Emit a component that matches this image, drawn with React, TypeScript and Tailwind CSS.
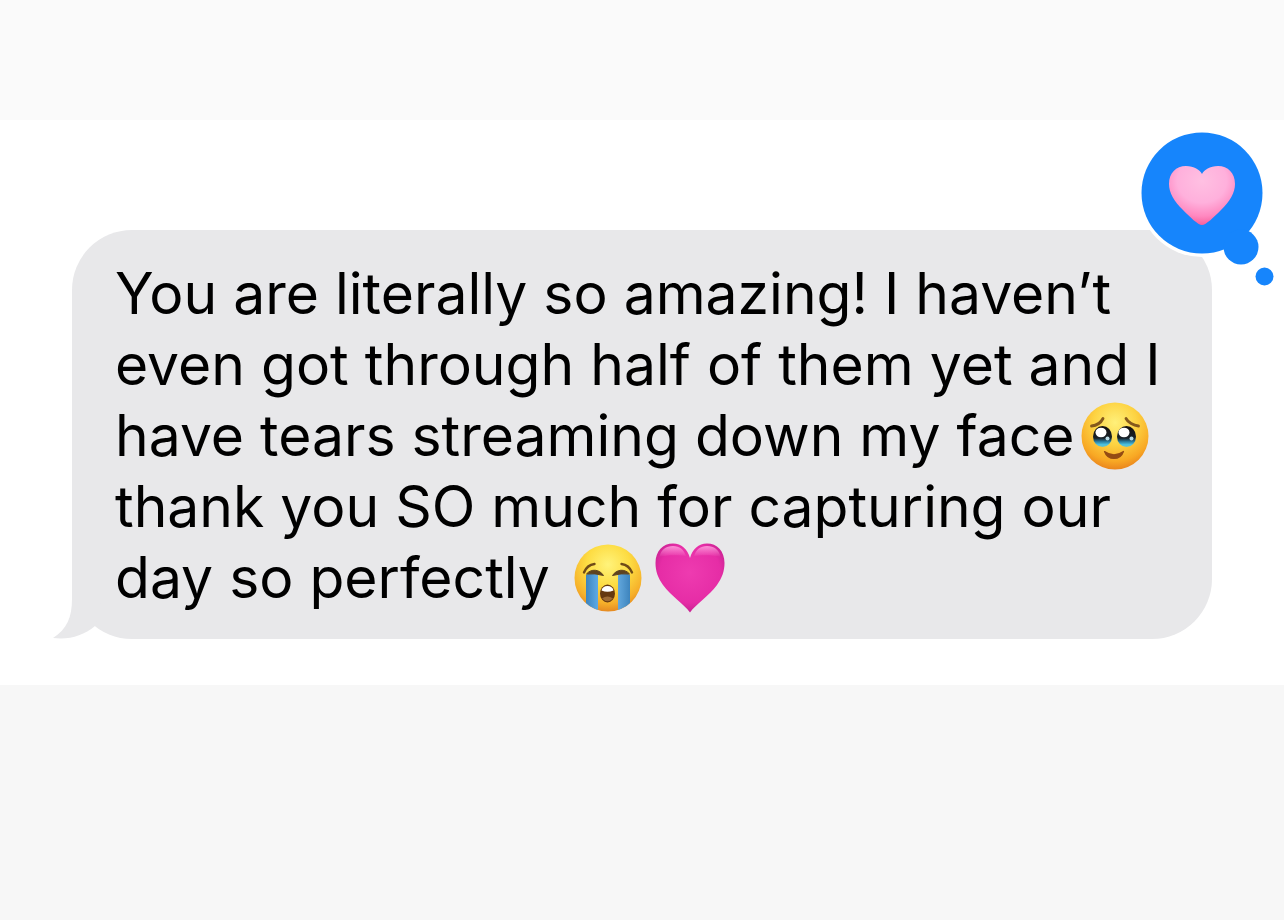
import React from "react";

function TearyFace() {
  return (
    <svg role="img" aria-label="face holding back tears" viewBox="0 0 68 68" className="ml-1.5 size-[68px] shrink-0">
      <defs>
        <radialGradient id="teary-skin" cx="0.5" cy="0.3" r="0.72">
          <stop offset="0" stopColor="#fff07a" />
          <stop offset="0.45" stopColor="#fdd342" />
          <stop offset="0.8" stopColor="#f8a824" />
          <stop offset="1" stopColor="#e8801c" />
        </radialGradient>
        <linearGradient id="teary-eye" x1="0" y1="0" x2="0" y2="1">
          <stop offset="0" stopColor="#15100e" />
          <stop offset="0.58" stopColor="#182128" />
          <stop offset="0.74" stopColor="#2a7c9f" />
          <stop offset="0.88" stopColor="#4cc0de" />
          <stop offset="1" stopColor="#6cc4c4" />
        </linearGradient>
      </defs>
      <circle cx="34" cy="34" r="33.5" fill="url(#teary-skin)" />
      <path d="M10.500 24C15.500 23.500 20 20.500 22 16.500M57.500 24C52.500 23.500 47 20.500 45 16.500" fill="none" stroke="#85591c" strokeWidth="2.800" strokeLinecap="round" />
      <ellipse cx="21.500" cy="34.500" rx="9.500" ry="10.500" fill="url(#teary-eye)" />
      <ellipse cx="45.500" cy="34.500" rx="9.500" ry="10.500" fill="url(#teary-eye)" />
      <ellipse cx="20" cy="30.500" rx="5.500" ry="4.800" fill="#fff" />
      <ellipse cx="43" cy="30.500" rx="5.500" ry="4.800" fill="#fff" />
      <circle cx="26.500" cy="36.500" r="2" fill="#b9dce6" />
      <circle cx="50.500" cy="36.500" r="2" fill="#b9dce6" />
      <path d="M23.500 49.500Q33 56 42.500 49.500Q40 56.500 33 56.500T23.500 49.500Z" fill="#944b14" stroke="#944b14" strokeWidth="1.200" strokeLinejoin="round" />
    </svg>
  );
}

function CryingFace() {
  return (
    <svg role="img" aria-label="loudly crying face" viewBox="0 0 68 68" className="size-[68px] shrink-0">
      <defs>
        <radialGradient id="crying-skin" cx="0.5" cy="0.3" r="0.72">
          <stop offset="0" stopColor="#fff37b" />
          <stop offset="0.45" stopColor="#fddc42" />
          <stop offset="0.8" stopColor="#f6b02a" />
          <stop offset="1" stopColor="#e38420" />
        </radialGradient>
        <linearGradient id="crying-tear" x1="0" y1="0" x2="1" y2="0">
          <stop offset="0" stopColor="#3d84bd" />
          <stop offset="0.25" stopColor="#5ba7e2" />
          <stop offset="0.6" stopColor="#74b8ec" />
          <stop offset="1" stopColor="#3d84bd" />
        </linearGradient>
        <clipPath id="crying-clip">
          <circle cx="34" cy="34" r="33.500" />
        </clipPath>
      </defs>
      <circle cx="34" cy="34" r="33.500" fill="url(#crying-skin)" />
      <g clipPath="url(#crying-clip)">
        <path d="M12 31Q18 27 24 31V68H12ZM44 31Q50 27 56 31V68H44Z" fill="url(#crying-tear)" />
      </g>
      <path d="M10 28.500Q13 21 20.500 20M58 28.500Q55 21 47.500 20" fill="none" stroke="#6f4b18" strokeWidth="2.400" strokeLinecap="round" />
      <path d="M12.500 30C17 24.500 25.500 25 29.500 31.500Q21 29 12.500 30ZM55.500 30C51 24.500 42.500 25 38.500 31.500Q47 29 55.500 30Z" fill="#5e431f" stroke="#5e431f" strokeWidth="1" strokeLinejoin="round" />
      <ellipse cx="33.500" cy="49.500" rx="7.500" ry="9" fill="#65380f" />
      <path d="M27.500 46.500Q28.500 42 33.500 42T39.500 46.500Q33.500 49 27.500 46.500Z" fill="#fff" />
      <path d="M28 54.500Q33.500 50.500 39 54.500Q33.500 60 28 54.500Z" fill="#9c6a35" />
    </svg>
  );
}

function PinkHeart() {
  return (
    <svg role="img" aria-label="pink heart" viewBox="0 0 70 70" className="ml-[13px] size-[70px] shrink-0">
      <defs>
        <radialGradient id="heart-fill" cx="0.5" cy="0.42" r="0.62">
          <stop offset="0" stopColor="#ee3bb0" />
          <stop offset="0.7" stopColor="#e62da6" />
          <stop offset="1" stopColor="#c01f8c" />
        </radialGradient>
        <linearGradient id="heart-shine" x1="0" y1="0" x2="0" y2="1">
          <stop offset="0" stopColor="#ff9bdc" stopOpacity="0.9" />
          <stop offset="1" stopColor="#ff9bdc" stopOpacity="0" />
        </linearGradient>
      </defs>
      <path d="M35 69.500C29 61 16 53 8 42C3 35 0.500 28 0.500 20C0.500 8 8 0.500 18 0.500C26.500 0.500 32.500 6 35 15C37.500 6 43.500 0.500 52 0.500C62 0.500 69.500 8 69.500 20C69.500 28 67 35 62 42C54 53 41 61 35 69.500Z" fill="url(#heart-fill)" />
      <path d="M4.500 14C6 6.500 11 3 18 3C24.500 3 29 6.500 31 13C24 12 11 12 4.500 14ZM65.500 14C64 6.500 59 3 52 3C45.500 3 41 6.500 39 13C46 12 59 12 65.500 14Z" fill="url(#heart-shine)" />
    </svg>
  );
}

function Reaction() {
  return (
    <svg
      role="img"
      aria-label="Reacted with a heart"
      viewBox="0 0 150 165"
      className="absolute -top-[105px] -right-[72px] h-[165px] w-[150px]"
    >
      <defs>
        <radialGradient id="reaction-heart" cx="0.5" cy="0.25" r="0.75">
          <stop offset="0" stopColor="#ffc0e2" />
          <stop offset="0.5" stopColor="#ffb0dc" />
          <stop offset="0.8" stopColor="#ff88c0" />
          <stop offset="1" stopColor="#f6609c" />
        </radialGradient>
      </defs>
      <circle cx="68" cy="68" r="64" fill="#fff" />
      <circle cx="107" cy="122" r="21" fill="#fff" />
      <circle cx="68" cy="68" r="60.500" fill="#1685fc" />
      <circle cx="107" cy="122" r="17.500" fill="#1685fc" />
      <circle cx="130.500" cy="151.500" r="9" fill="#1685fc" />
      <path d="M68 100C64 100 56 92 49 85C40 76 35 68 35 59C35 48 42 41 52 41C60 41 66 45 68 49C70 45 76 41 84 41C94 41 101 48 101 59C101 68 96 76 87 85C80 92 72 100 68 100Z" fill="url(#reaction-heart)" />
    </svg>
  );
}

function BubbleTail() {
  return (
    <svg aria-hidden="true" viewBox="0 0 62 70" className="absolute bottom-0 -left-5 h-[70px] w-[62px]">
      <path d="M20 0V30C20 48 15 60 1 69C17 71 31 67 43 57L50 30V0Z" fill="#e8e8ea" />
    </svg>
  );
}

export default function App() {
  return (
    <main className="flex min-h-screen flex-col bg-[#f7f7f7]">
      <div className="h-[120px] bg-[#fafafa]" />
      <section className="bg-white px-[72px] pt-[110px] pb-[46px]">
        <div className="relative rounded-[60px] bg-[#e8e8ea] pt-7 pb-[26px] pl-[43px]">
          <BubbleTail />
          <p className="relative font-['Inter',sans-serif] text-[57px] leading-[71px] whitespace-nowrap text-black">
            <span className="block">You are literally so amazing! I haven’t</span>
            <span className="block">even got through half of them yet and I</span>
            <span className="flex h-[71px] items-center">
              have tears streaming down my face
              <TearyFace />
            </span>
            <span className="block">thank you SO much for capturing our</span>
            <span className="flex h-[71px] items-center">
              day so perfectly
              <span className="ml-6 flex items-center">
                <CryingFace />
                <PinkHeart />
              </span>
            </span>
          </p>
          <Reaction />
        </div>
      </section>
    </main>
  );
}
